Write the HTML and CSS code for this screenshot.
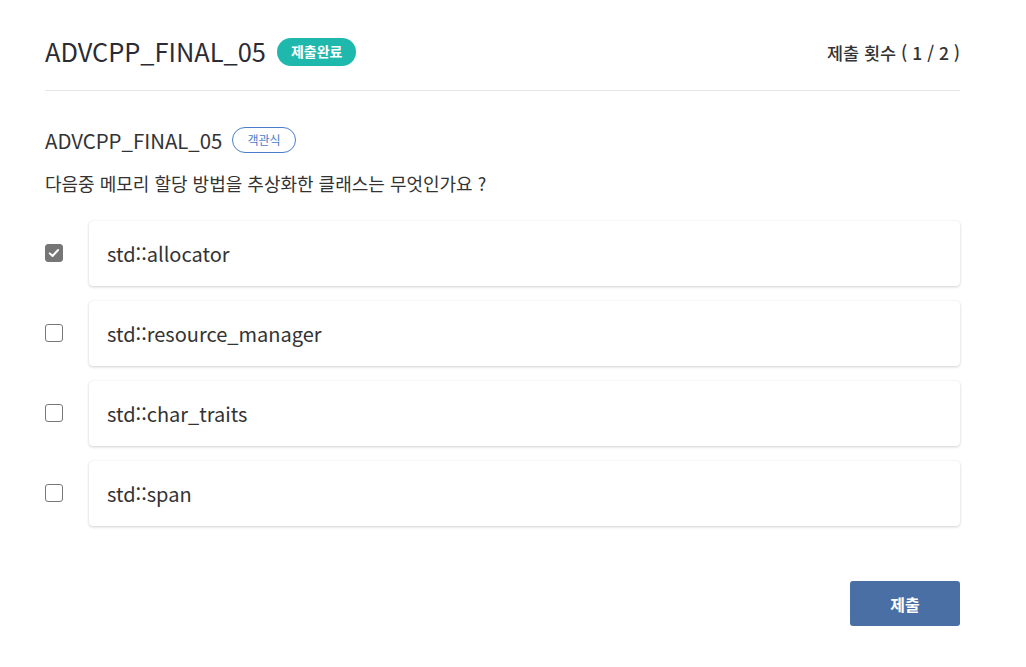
FILE: index.html
```html
<!DOCTYPE html>
<html lang="ko">
<head>
<meta charset="utf-8">
<link rel="stylesheet" href="styles.css">
</head>
<body>
<div class="page">
  <header class="head">
    <div class="head-left">
      <h1 class="title">ADVCPP_FINAL_05</h1>
      <span class="badge-done">제출완료</span>
    </div>
    <div class="count">제출 횟수 ( 1 / 2 )</div>
  </header>
  <section class="problem">
    <div class="sub">
      <h2 class="subtitle">ADVCPP_FINAL_05</h2>
      <span class="badge-type">객관식</span>
    </div>
    <p class="question">다음중 메모리 할당 방법을 추상화한 클래스는 무엇인가요 ?</p>
    <ul class="options">
      <li class="option"><span class="check checked"><svg viewBox="0 0 18 18" width="18" height="18"><path d="M4.2 9.4 L7.4 12.4 L13.6 5.6" fill="none" stroke="#fff" stroke-width="2.2" stroke-linecap="round" stroke-linejoin="round"/></svg></span><div class="card">std::allocator</div></li>
      <li class="option"><span class="check"></span><div class="card">std::resource_manager</div></li>
      <li class="option"><span class="check"></span><div class="card">std::char_traits</div></li>
      <li class="option"><span class="check"></span><div class="card">std::span</div></li>
    </ul>
    <div class="actions"><button class="submit">제출</button></div>
  </section>
</div>
</body>
</html>
```
FILE: styles.css
```css
* { box-sizing: border-box; }
body {
  margin: 0;
  background: #fff;
  font-family: "Noto Sans CJK KR", "Noto Sans", sans-serif;
  color: #333;
}
.page { width: 915px; margin-left: 45px; }
.head {
  display: flex;
  align-items: center;
  justify-content: space-between;
  height: 91px;
  padding-top: 12px;
  border-bottom: 1px solid #e6e6e6;
}
.head-left { display: flex; align-items: center; gap: 11px; }
.title { margin: 0; font-size: 25.4px; font-weight: 400; color: #2b2b33; }
.badge-done {
  background: #1fb8ad;
  color: #fff;
  font-size: 14px;
  font-weight: 700;
  border-radius: 15px;
  padding: 3px 14px 4px;
  line-height: 21px;
  margin-top: 2px;
}
.count { font-size: 17.5px; font-weight: 500; color: #333; padding-top: 2px; }
.problem { padding-top: 34px; }
.sub { display: flex; align-items: center; gap: 10px; }
.subtitle { margin: 0; font-size: 20.4px; font-weight: 400; color: #333; }
.badge-type {
  border: 1px solid #4a7dc9;
  color: #4a7dc9;
  border-radius: 14px;
  font-size: 12px;
  padding: 2px 14px;
  line-height: 20px;
}
.question { margin: 14px 0 0; font-size: 18px; line-height: 28px; color: #333; }
.options { list-style: none; margin: 24px 0 0; padding: 0; display: flex; flex-direction: column; gap: 15px; }
.option { display: flex; align-items: center; }
.check {
  width: 18px; height: 18px;
  border: 1.5px solid #777;
  border-radius: 3px;
  margin-right: 26px;
  display: flex; align-items: center; justify-content: center;
  margin-top: -2px;
}
.check.checked { background: #767676; border-color: #767676; }
.check svg { display: block; }
.card {
  flex: 1;
  height: 65px;
  display: flex; align-items: center;
  padding-left: 18px;
  font-size: 20px;
  color: #333;
  background: #fff;
  border-radius: 4px;
  box-shadow: 0 1px 3px rgba(0,0,0,0.18), 0 0 1px rgba(0,0,0,0.08);
}
.actions { display: flex; justify-content: flex-end; margin-top: 55px; }
.submit {
  width: 110px; height: 45px;
  background: #4a6fa5;
  color: #fff;
  border: none;
  border-radius: 3px;
  font-family: inherit;
  font-size: 16px;
  font-weight: 700;
}
```
